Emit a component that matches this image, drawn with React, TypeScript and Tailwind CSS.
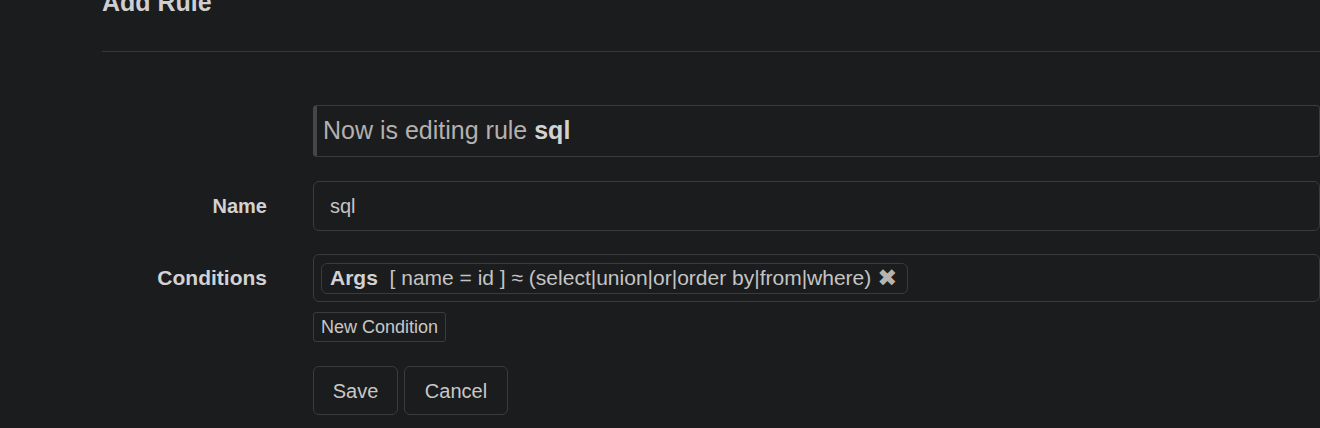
import React from 'react';

const font = { fontFamily: '"Liberation Sans", Arial, sans-serif' };

export default function App() {
  return (
    <div className="w-[1320px] h-[428px] overflow-hidden bg-[#1b1c1e] text-[#c8c8c8]" style={font}>
      <div className="pl-[102px]">
        {/* header, title scrolled partly off the top */}
        <div className="h-[52px] border-b border-[#38393b]">
          <h3 className="relative -top-[13px] text-[25px] leading-[30px] font-bold text-[#cfcfcf]">Add Rule</h3>
        </div>

        <div className="flex mt-[53px]">
          <div className="w-[211px] shrink-0" />
          <div className="flex-1 h-[52px] flex items-center border border-[#3a3b3d] border-l-4 border-l-[#45464a] rounded-[4px] pl-[6px] text-[25px] text-[#b3b0ad]">
            Now is editing rule&nbsp;<b className="text-[#d2d2d2]">sql</b>
          </div>
        </div>

        <div className="flex items-center mt-[24px]">
          <label className="w-[165px] shrink-0 text-right font-bold text-[20px] text-[#d2d2d2]">Name</label>
          <div className="w-[46px] shrink-0" />
          <div className="flex-1 h-[50px] flex items-center border border-[#3a3b3d] rounded-[6px] pl-[16px] text-[20px] text-[#c4c4c4]">
            sql
          </div>
        </div>

        <div className="flex items-center mt-[23px]">
          <label className="w-[165px] shrink-0 text-right font-bold text-[21px] text-[#d2d2d2]">Conditions</label>
          <div className="w-[46px] shrink-0" />
          <div className="flex-1 h-[48px] flex items-center border border-[#3a3b3d] rounded-[6px] pl-[7px]">
            <span className="h-[31px] flex items-center border border-[#3a3b3d] rounded-[6px] pl-[8px] pr-[10px] text-[21px] text-[#c4c4c4] whitespace-pre">
              <b className="text-[#d2d2d2]">Args</b>
              {'  [ name = id ] ≈ (select|union|or|order by|from|where) '}
              <span className="text-[#b8b3ad] text-[24px] leading-none" style={{ fontFamily: '"DejaVu Sans", sans-serif' }}>✖</span>
            </span>
          </div>
        </div>

        <div className="flex mt-[10px]">
          <div className="w-[211px] shrink-0" />
          <button className="h-[30px] px-[7px] border border-[#3a3b3d] rounded-[3px] text-[18px] text-[#c8c8c8]">New Condition</button>
        </div>

        <div className="flex mt-[24px] gap-[6px]">
          <div className="w-[205px] shrink-0" />
          <button className="h-[49px] w-[85px] border border-[#3a3b3d] rounded-[6px] text-[20px] text-[#c8c8c8]">Save</button>
          <button className="h-[49px] w-[104px] border border-[#3a3b3d] rounded-[6px] text-[20px] text-[#c8c8c8]">Cancel</button>
        </div>
      </div>
    </div>
  );
}
